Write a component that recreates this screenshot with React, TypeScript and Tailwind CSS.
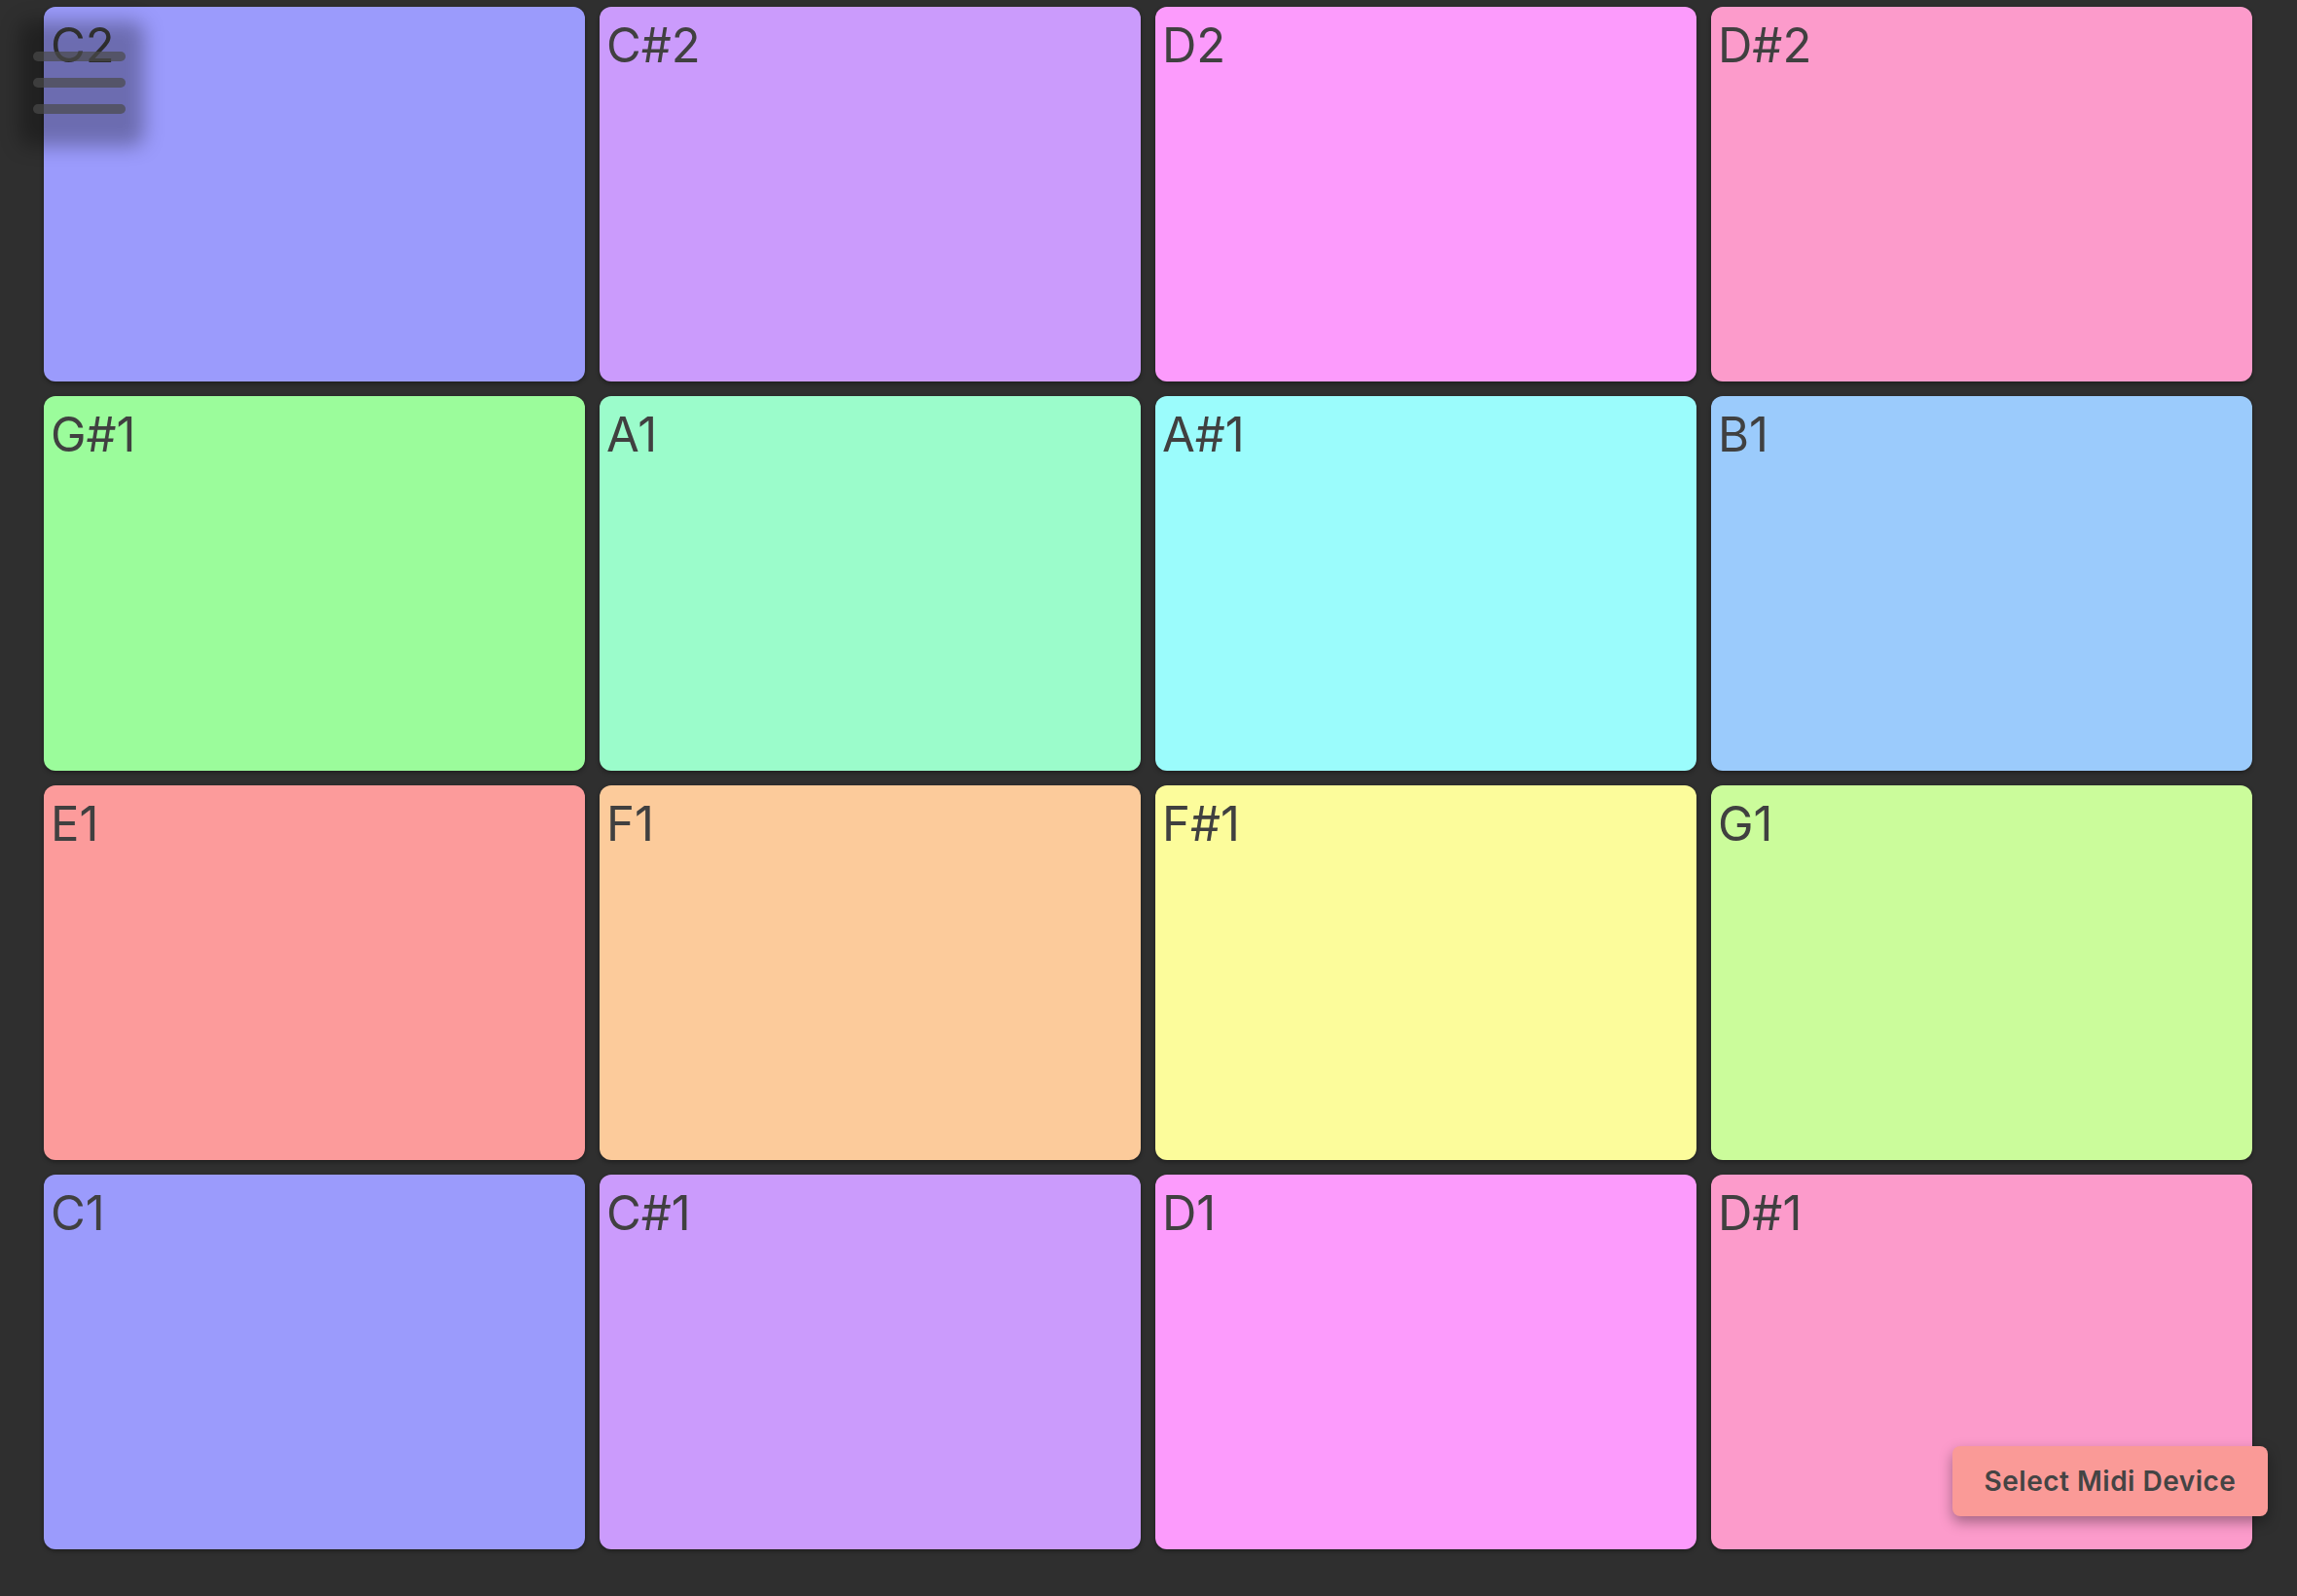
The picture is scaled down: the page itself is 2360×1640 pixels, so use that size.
import React from "react";

// pads in display order, top row first
const PADS: { note: string; color: string }[] = [
  { note: "C2", color: "bg-[#9b9bfc]" },
  { note: "C#2", color: "bg-[#cb9bfc]" },
  { note: "D2", color: "bg-[#fc9bfc]" },
  { note: "D#2", color: "bg-[#fc9bcb]" },
  { note: "G#1", color: "bg-[#9bfc9b]" },
  { note: "A1", color: "bg-[#9bfccb]" },
  { note: "A#1", color: "bg-[#9bfcfc]" },
  { note: "B1", color: "bg-[#9bcbfc]" },
  { note: "E1", color: "bg-[#fc9b9b]" },
  { note: "F1", color: "bg-[#fccb9b]" },
  { note: "F#1", color: "bg-[#fcfc9b]" },
  { note: "G1", color: "bg-[#cbfc9b]" },
  { note: "C1", color: "bg-[#9b9bfc]" },
  { note: "C#1", color: "bg-[#cb9bfc]" },
  { note: "D1", color: "bg-[#fc9bfc]" },
  { note: "D#1", color: "bg-[#fc9bcb]" },
];

export default function App() {
  return (
    <div
      className="relative h-[1640px] w-full overflow-hidden bg-[#2f2f2f]"
      style={{ fontFamily: "Inter, 'Noto Sans', sans-serif" }}
    >
      {/* Pad grid */}
      <div className="grid grid-cols-[repeat(4,556px)] grid-rows-[repeat(4,385px)] gap-[15px] pl-[45px] pt-[7px]">
        {PADS.map((pad) => (
          <button
            key={pad.note}
            className={`${pad.color} rounded-[12px] pl-[7px] pt-[15px] text-left flex items-start shadow-[0_2px_4px_rgba(0,0,0,0.35)]`}
          >
            <span className="text-[49px] leading-none text-[#404040]">
              {pad.note}
            </span>
          </button>
        ))}
      </div>

      {/* Menu toggle */}
      <div className="absolute left-[20px] top-[22px] h-[128px] w-[128px] rounded-[12px] bg-black/30 blur-[10px]" />
      <div className="absolute left-[34px] top-[53px] flex flex-col gap-[17px]">
        <div className="h-[10px] w-[95px] rounded-full bg-[#4a4a4a]/70" />
        <div className="h-[10px] w-[95px] rounded-full bg-[#4a4a4a]/70" />
        <div className="h-[10px] w-[95px] rounded-full bg-[#4a4a4a]/70" />
      </div>

      {/* Midi device button */}
      <button className="absolute right-[30px] bottom-[82px] h-[72px] w-[324px] rounded-[8px] bg-[#fa9a97] text-[28px] font-semibold tracking-[0.5px] text-[#444444] shadow-[0_6px_14px_rgba(0,0,0,0.35)]">
        Select Midi Device
      </button>
    </div>
  );
}
